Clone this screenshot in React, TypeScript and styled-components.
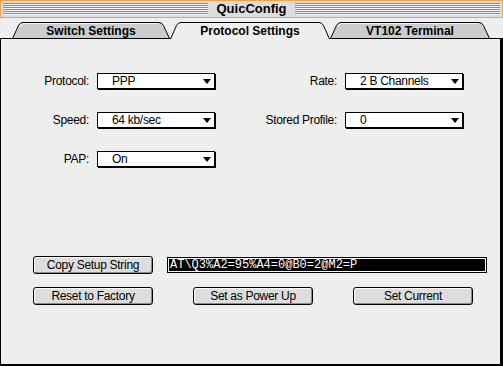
import React from "react";
import styled, { createGlobalStyle } from "styled-components";

const Global = createGlobalStyle`
  html, body { margin: 0; padding: 0; background: #eeeeee; }
  body { font-family: "Liberation Sans", Arial, sans-serif; }
  * { box-sizing: border-box; }
`;

const Window = styled.div`
  width: 503px;
  height: 366px;
  display: flex;
  flex-direction: column;
  background: #eeeeee;
  overflow: hidden;
`;

const TitleBar = styled.div`
  height: 18px;
  border: 1px solid #f0a24a;
  background: #dddddd;
  display: flex;
  align-items: center;
  gap: 8px;
  padding: 0 2px;
`;

const Stripes = styled.div`
  flex: 1;
  height: 12px;
  background: repeating-linear-gradient(
    to bottom,
    #8a8a8a 0px,
    #8a8a8a 1px,
    #f4f4f4 1px,
    #f4f4f4 2px
  );
`;

const Title = styled.div`
  font: bold 13px "Liberation Sans", Arial, sans-serif;
  color: #000;
  line-height: 14px;
`;

const TabRow = styled.div`
  height: 21px;
  display: flex;
  align-items: flex-end;
  padding-left: 12px;
  background: linear-gradient(#000, #000) left bottom / 100% 1px no-repeat,
    #eeeeee;
`;

const TabBox = styled.div<{ $w: number }>`
  position: relative;
  width: ${(p) => p.$w}px;
  height: 21px;
  display: flex;
  align-items: center;
  justify-content: center;
  padding-top: 4px;
`;

const TabShape = styled.svg`
  position: absolute;
  left: 0;
  bottom: 0;
`;

const TabLabel = styled.span`
  position: relative;
  font: bold 12px "Liberation Sans", Arial, sans-serif;
  color: #000;
  line-height: 14px;
`;

function Tab({ w, active, children }: { w: number; active?: boolean; children: React.ReactNode }) {
  const outline = `M0.5,17 L6.5,3.5 Q8,0.5 11,0.5 L${w - 11},0.5 Q${w - 8},0.5 ${w - 6.5},3.5 L${w - 0.5},17`;
  return (
    <TabBox $w={w}>
      <TabShape width={w} height={17} viewBox={`0 0 ${w} 17`}>
        {active ? (
          <>
            <path d={`${outline} Z`} fill="#eeeeee" stroke="none" />
            <path d={outline} fill="none" stroke="#000" strokeWidth={1} />
          </>
        ) : (
          <>
            <path d={`${outline.replace(/17/g, "16.5")} Z`} fill="#cccccc" stroke="#000" strokeWidth={1} />
            <path
              d={`M7.8,5 Q9,1.5 11.5,1.5 L${w - 11.5},1.5`}
              fill="none"
              stroke="#f2f2f2"
              strokeWidth={1}
            />
          </>
        )}
      </TabShape>
      <TabLabel>{children}</TabLabel>
    </TabBox>
  );
}

const Content = styled.div`
  flex: 1;
  display: flex;
  flex-direction: column;
  background: #eeeeee;
  border-left: 1px solid #000;
  border-right: 3px solid #000;
  border-bottom: 2px solid #000;
  padding-top: 33px;
`;

const FieldGrid = styled.div`
  display: grid;
  grid-template-columns: 88px 119px 113px 119px;
  grid-template-rows: 17px 17px 17px;
  column-gap: 8px;
  row-gap: 22px;
  align-items: center;
`;

const Label = styled.div`
  text-align: right;
  font-size: 12px;
  letter-spacing: -0.3px;
  color: #000;
`;

const Popup = styled.div`
  width: 118px;
  height: 16px;
  border: 1px solid #000;
  background: #fff;
  box-shadow: 1px 1px 0 #000;
  display: flex;
  align-items: center;
  justify-content: space-between;
  padding: 0 3px 0 14px;
  font-size: 12px;
  letter-spacing: -0.3px;
  color: #000;
`;

const Arrow = styled.span`
  width: 0;
  height: 0;
  border-left: 4.5px solid transparent;
  border-right: 4.5px solid transparent;
  border-top: 5px solid #000;
  margin-top: 1px;
`;

const ButtonArea = styled.div`
  margin-top: 89px;
  padding-left: 32px;
  display: flex;
  flex-direction: column;
  gap: 13px;
`;

const ButtonRow = styled.div<{ $gap: number }>`
  display: flex;
  align-items: center;
  gap: ${(p) => p.$gap}px;
`;

const Button = styled.button`
  width: 120px;
  height: 18px;
  margin: 0;
  padding: 0;
  border: 1px solid #000;
  border-radius: 3px;
  background: #dddddd;
  box-shadow: inset 1px 1px 0 #ffffff, inset -1px -1px 0 #8a8a8a;
  font: 12px "Liberation Sans", Arial, sans-serif;
  letter-spacing: -0.3px;
  color: #000;
  line-height: 14px;
`;

const SetupField = styled.div`
  width: 320px;
  height: 16px;
  border: 1px solid #000;
  box-shadow: inset 0 0 0 1px #ffffff;
  background: #000;
  color: #fff;
  font: 12px "Liberation Mono", "Courier New", monospace;
  line-height: 14px;
  padding-left: 2px;
  white-space: nowrap;
  overflow: hidden;
`;

export default function App() {
  return (
    <>
      <Global />
      <Window>
        <TitleBar>
          <Stripes />
          <Title>QuicConfig</Title>
          <Stripes />
        </TitleBar>
        <TabRow>
          <Tab w={158}>Switch Settings</Tab>
          <Tab w={160} active>
            Protocol Settings
          </Tab>
          <Tab w={160}>VT102 Terminal</Tab>
        </TabRow>
        <Content>
          <FieldGrid>
            <Label>Protocol:</Label>
            <Popup>
              PPP
              <Arrow />
            </Popup>
            <Label>Rate:</Label>
            <Popup>
              2 B Channels
              <Arrow />
            </Popup>

            <Label>Speed:</Label>
            <Popup>
              64 kb/sec
              <Arrow />
            </Popup>
            <Label>Stored Profile:</Label>
            <Popup>
              0
              <Arrow />
            </Popup>

            <Label>PAP:</Label>
            <Popup>
              On
              <Arrow />
            </Popup>
          </FieldGrid>
          <ButtonArea>
            <ButtonRow $gap={14}>
              <Button>Copy Setup String</Button>
              <SetupField>AT\Q3%A2=95%A4=0@B0=2@M2=P</SetupField>
            </ButtonRow>
            <ButtonRow $gap={40}>
              <Button>Reset to Factory</Button>
              <Button>Set as Power Up</Button>
              <Button>Set Current</Button>
            </ButtonRow>
          </ButtonArea>
        </Content>
      </Window>
    </>
  );
}
